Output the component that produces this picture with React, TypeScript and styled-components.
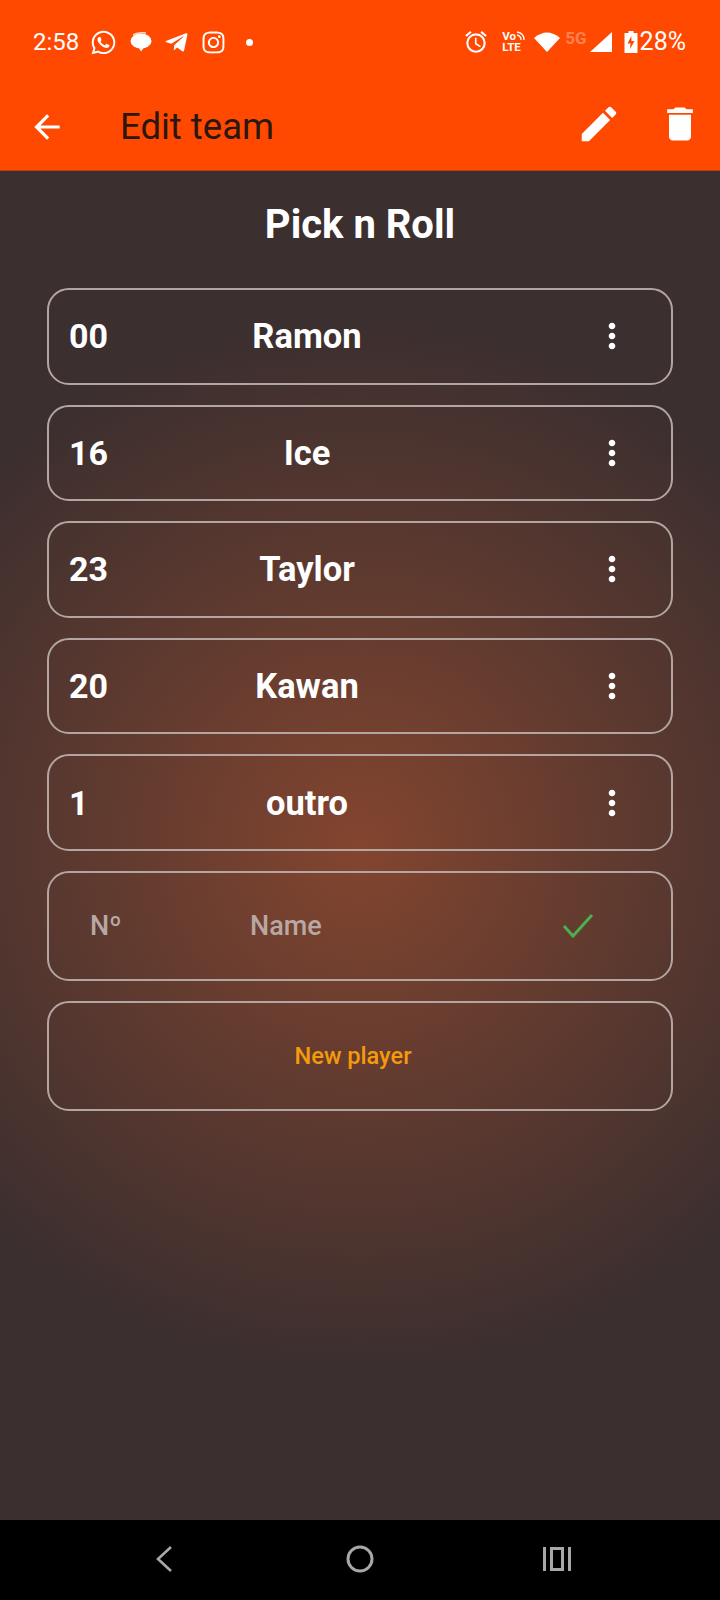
import * as React from 'react';
import styled, { createGlobalStyle } from 'styled-components';
import { FaWhatsapp, FaTelegramPlane, FaInstagram } from 'react-icons/fa';
import { MdArrowBack, MdEdit, MdDelete, MdMoreVert, MdOutlineAlarm } from 'react-icons/md';

const players = [
	{ number: '00', name: 'Ramon' },
	{ number: '16', name: 'Ice' },
	{ number: '23', name: 'Taylor' },
	{ number: '20', name: 'Kawan' },
	{ number: '1', name: 'outro' },
];

const GlobalStyle = createGlobalStyle`
	html, body {
		margin: 0;
		padding: 0;
		background: #000;
	}
	* {
		box-sizing: border-box;
	}
`;

const Screen = styled.div`
	width: 720px;
	height: 1600px;
	display: flex;
	flex-direction: column;
	font-family: Roboto, 'Liberation Sans', sans-serif;
	overflow: hidden;
`;

const Header = styled.header`
	height: 171px;
	background: #ff4900;
	border-bottom: 1px solid #a8431c;
	display: flex;
	flex-direction: column;
	color: #fff;
`;

const StatusBar = styled.div`
	height: 84px;
	display: flex;
	align-items: center;
	justify-content: space-between;
	padding: 0 34px 0 33px;
`;

const StatusGroup = styled.div`
	display: flex;
	align-items: center;
`;

const StatusText = styled.span<{ $size: number }>`
	font-size: ${(props) => props.$size}px;
	line-height: 28px;
	color: #fff;
`;

const StatusSlot = styled.span<{ $left: number }>`
	display: flex;
	align-items: center;
	margin-left: ${(props) => props.$left}px;
`;

const Dot = styled.span`
	width: 7px;
	height: 7px;
	margin-left: 20px;
	border-radius: 50%;
	background: #fff;
`;

const VoLte = styled.span`
	margin-left: 13px;
	width: 24px;
	display: flex;
	flex-direction: column;
	font-size: 11.5px;
	font-weight: 700;
	line-height: 11px;
	color: #fff;
	position: relative;
`;

const VoArcs = styled.svg`
	position: absolute;
	top: 0;
	right: 0;
`;

const FiveG = styled.span`
	margin-left: 5px;
	margin-top: -8px;
	font-size: 17px;
	font-weight: 700;
	color: rgba(255, 255, 255, 0.32);
`;

const Toolbar = styled.div`
	height: 86px;
	display: grid;
	grid-template-columns: 89px 1fr 84px 44px;
	align-items: center;
	padding: 0 26px 4px 28px;
`;

const BackButton = styled.span`
	display: flex;
	margin-top: 3px;
`;

const ToolbarTitle = styled.h1`
	margin: 2px 0 0 3px;
	font-size: 36.5px;
	font-weight: 400;
	color: #2b1710;
`;

const ToolbarAction = styled.span<{ $shift: number }>`
	display: flex;
	justify-content: center;
	transform: translate(${(props) => props.$shift}px, -1px);
`;

const Body = styled.main`
	flex: 1;
	background: radial-gradient(circle 520px at 360px 675px, #83452f 0%, #3c2f2f 100%);
	display: flex;
	flex-direction: column;
	padding: 0 47px;
`;

const TeamName = styled.h2`
	margin: 0;
	height: 117px;
	line-height: 108px;
	text-align: center;
	font-size: 40px;
	font-weight: 700;
	color: #fff;
`;

const List = styled.div`
	display: flex;
	flex-direction: column;
	gap: 20px;
`;

const Card = styled.div<{ $height: number }>`
	height: ${(props) => props.$height}px;
	border: 2px solid #b3a5a1;
	border-radius: 22px;
	display: grid;
	grid-template-columns: 100px 276px 1fr;
	align-items: center;
	padding-left: 20px;
`;

const PlayerNumber = styled.span`
	font-size: 34px;
	font-weight: 700;
	color: #fff;
`;

const PlayerName = styled.span`
	font-size: 34.5px;
	font-weight: 700;
	color: #fff;
	text-align: center;
`;

const MoreButton = styled.span`
	display: flex;
	justify-content: flex-end;
	padding-right: 39px;
	color: #fff;
`;

const Placeholder = styled.span<{ $indent: number }>`
	padding-left: ${(props) => props.$indent}px;
	padding-top: 1px;
	font-size: 27px;
	font-weight: 500;
	color: #b8a8a3;
	line-height: 30px;
`;

const ConfirmIcon = styled.svg`
	margin-left: 117px;
`;

const NewPlayerCard = styled.div`
	height: 110px;
	border: 2px solid #b3a5a1;
	border-radius: 22px;
	display: flex;
	align-items: center;
	justify-content: center;
	padding: 0 14px 0 0;
	font-size: 23.6px;
	font-weight: 500;
	color: #f59a0a;
`;

const NavBar = styled.nav`
	height: 80px;
	background: #000;
	display: grid;
	grid-template-columns: repeat(3, 196.5px);
	justify-content: center;
	align-items: center;
	padding-bottom: 3px;
`;

const NavSlot = styled.span`
	display: flex;
	justify-content: center;
`;

export default function App() {
	return (
		<>
			<GlobalStyle />
			<Screen>
				<Header>
					<StatusBar>
						<StatusGroup>
							<StatusText $size={24}>2:58</StatusText>
							<StatusSlot $left={11}>
								<FaWhatsapp size={27} color="#fff" />
							</StatusSlot>
							<StatusSlot $left={13}>
								<svg width="22" height="20" viewBox="0 0 22 20">
									<ellipse cx="11" cy="9" rx="10.5" ry="7.5" fill="#fff" />
									<path d="M3 3 Q8 0 16 1" fill="none" stroke="#ffd2bb" strokeWidth="1.6" />
									<path d="M8 14 L15 14 L11 19.5 Z" fill="#fff" />
								</svg>
							</StatusSlot>
							<StatusSlot $left={12}>
								<FaTelegramPlane size={25} color="#fff" />
							</StatusSlot>
							<StatusSlot $left={12}>
								<FaInstagram size={25} color="#fff" />
							</StatusSlot>
							<Dot />
						</StatusGroup>
						<StatusGroup>
							<MdOutlineAlarm size={26} color="#fff" />
							<VoLte>
								<span>Vo</span>
								<span>LTE</span>
								<VoArcs width="10" height="11" viewBox="0 0 10 11">
									<path d="M1 1 Q8 2 8 9 M1 4 Q5 5 5 9" fill="none" stroke="#fff" strokeWidth="1.3" />
								</VoArcs>
							</VoLte>
							<StatusSlot $left={8}>
								<svg width="26" height="20" viewBox="0 0 26 20">
									<path d="M0 6 Q13 -5 26 6 L13 20 Z" fill="#fff" />
								</svg>
							</StatusSlot>
							<FiveG>5G</FiveG>
							<StatusSlot $left={3}>
								<svg width="22" height="20" viewBox="0 0 22 20">
									<path d="M22 0 L22 20 L0 20 Z" fill="#fff" />
								</svg>
							</StatusSlot>
							<StatusSlot $left={12}>
								<svg width="14" height="22" viewBox="0 0 13 22">
									<path
										fillRule="evenodd"
										d="M4 0 H9 V2 H13 V22 H0 V2 H4 Z M6.8 5 L3 12.5 H6 L5.6 18 L10 10 H7 Z"
										fill="#fff"
									/>
								</svg>
							</StatusSlot>
							<StatusSlot $left={2}>
								<StatusText $size={25}>28%</StatusText>
							</StatusSlot>
						</StatusGroup>
					</StatusBar>
					<Toolbar>
						<BackButton>
							<MdArrowBack size={38} color="#fff" />
						</BackButton>
						<ToolbarTitle>Edit team</ToolbarTitle>
						<ToolbarAction $shift={-9}>
							<MdEdit size={46} color="#fff" />
						</ToolbarAction>
						<ToolbarAction $shift={8}>
							<MdDelete size={46} color="#fff" />
						</ToolbarAction>
					</Toolbar>
				</Header>
				<Body>
					<TeamName>Pick n Roll</TeamName>
					<List>
						{players.map((player) => (
							<Card key={player.number} $height={96.6}>
								<PlayerNumber>{player.number}</PlayerNumber>
								<PlayerName>{player.name}</PlayerName>
								<MoreButton>
									<MdMoreVert size={40} />
								</MoreButton>
							</Card>
						))}
						<Card $height={110}>
							<Placeholder $indent={21}>Nº</Placeholder>
							<Placeholder $indent={81}>Name</Placeholder>
							<ConfirmIcon width="32" height="26" viewBox="0 0 32 26">
								<path d="M2 13 L11 23 L30 2" fill="none" stroke="#4caf50" strokeWidth="3" />
							</ConfirmIcon>
						</Card>
						<NewPlayerCard>New player</NewPlayerCard>
					</List>
				</Body>
				<NavBar>
					<NavSlot>
						<svg width="18" height="28" viewBox="0 0 18 28">
							<path d="M16 2 L3 14 L16 26" fill="none" stroke="#a8a8a8" strokeWidth="2.6" />
						</svg>
					</NavSlot>
					<NavSlot>
						<svg width="28" height="28" viewBox="0 0 28 28">
							<circle cx="14" cy="14" r="12" fill="none" stroke="#a8a8a8" strokeWidth="3" />
						</svg>
					</NavSlot>
					<NavSlot>
						<svg width="28" height="24" viewBox="0 0 28 24">
							<path d="M1.5 0 V24 M26.5 0 V24" stroke="#a8a8a8" strokeWidth="3" />
							<rect x="8.5" y="1.5" width="11" height="21" fill="none" stroke="#a8a8a8" strokeWidth="3" />
						</svg>
					</NavSlot>
				</NavBar>
			</Screen>
		</>
	);
}
